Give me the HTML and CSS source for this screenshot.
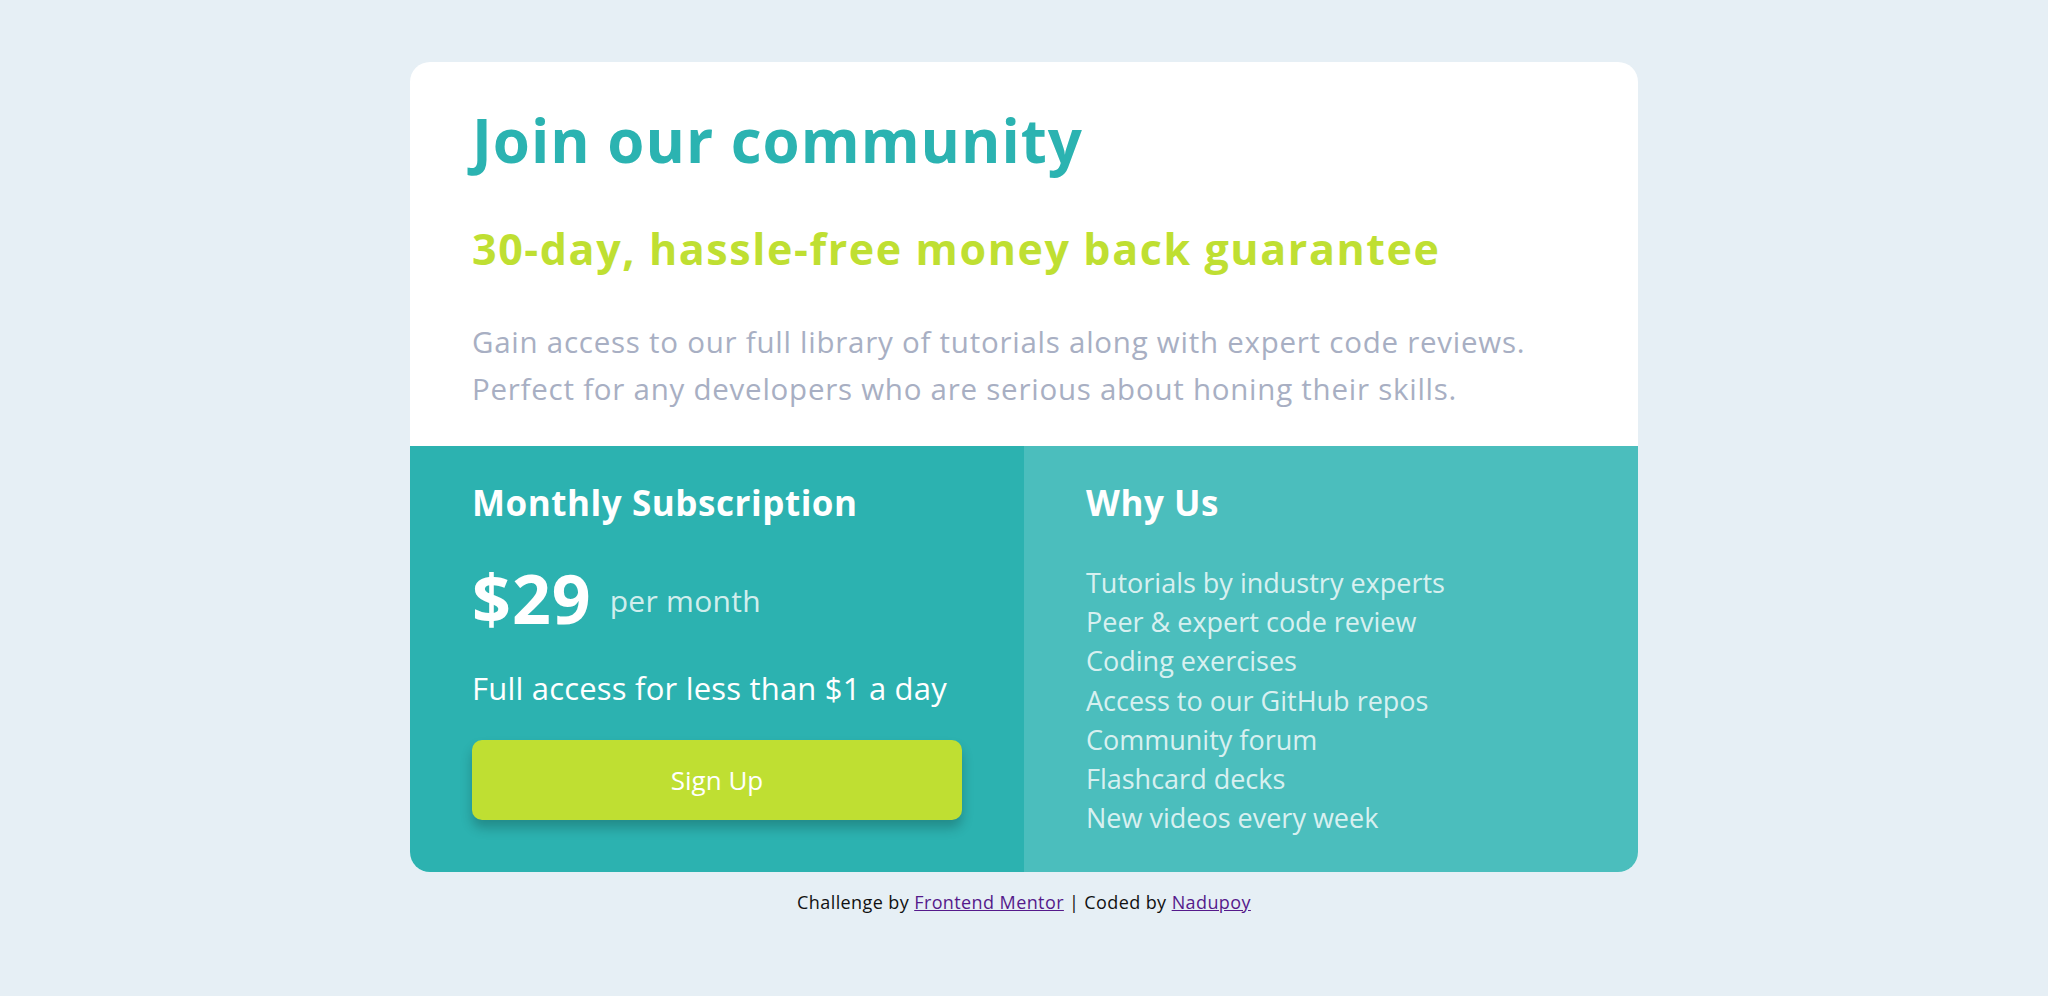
FILE: index.html
```html
<!DOCTYPE html>
<html lang="en">
<head>
<meta charset="utf-8">
<title>Single price grid component</title>
<link rel="stylesheet" href="styles.css">
</head>
<body>
<main class="card">
  <section class="intro">
    <h1 class="title">Join our community</h1>
    <h2 class="subtitle">30-day, hassle-free money back guarantee</h2>
    <p class="desc">Gain access to our full library of tutorials along with expert code reviews.<br>Perfect for any developers who are serious about honing their skills.</p>
  </section>
  <div class="bottom">
    <section class="plan">
      <h3 class="col-title">Monthly Subscription</h3>
      <div class="price-row">
        <span class="price">$29</span>
        <span class="per">per month</span>
      </div>
      <p class="access">Full access for less than $1 a day</p>
      <button class="signup" type="button">Sign Up</button>
    </section>
    <section class="why">
      <h3 class="col-title">Why Us</h3>
      <ul class="features">
        <li>Tutorials by industry experts</li>
        <li>Peer &amp; expert code review</li>
        <li>Coding exercises</li>
        <li>Access to our GitHub repos</li>
        <li>Community forum</li>
        <li>Flashcard decks</li>
        <li>New videos every week</li>
      </ul>
    </section>
  </div>
</main>
<footer class="attribution">
  Challenge by <a href="#" class="link">Frontend Mentor</a> | Coded by <a href="#" class="link">Nadupoy</a>
</footer>
</body>
</html>
```

FILE: styles.css
```css
* { box-sizing: border-box; }

html, body { margin: 0; padding: 0; }

body {
  background: #e6eff5;
  font-family: "Open Sans", "Liberation Sans", sans-serif;
  padding-top: 62px;
}

.card {
  width: 1228px;
  margin: 0 auto;
  background: #ffffff;
  border-radius: 20px;
  overflow: hidden;
}

.intro {
  padding: 42px 62px 34px;
}

.title {
  margin: 0;
  font-size: 60px;
  line-height: 72px;
  font-weight: 700;
  letter-spacing: 1px;
  color: #2bb3b1;
}

.subtitle {
  margin: 47px 0 0;
  font-size: 43px;
  line-height: 52px;
  font-weight: 700;
  letter-spacing: 1.6px;
  color: #bfdf32;
}

.desc {
  margin: 43px 0 0;
  font-size: 29.5px;
  line-height: 47px;
  letter-spacing: 0.75px;
  color: #a8afc3;
}

.bottom {
  display: grid;
  grid-template-columns: 1fr 1fr;
  color: #ffffff;
}

.plan {
  background: #2cb2b0;
  padding: 36px 62px 52px;
}

.why {
  background: #4bbebd;
  padding: 36px 62px 30px;
}

.col-title {
  margin: 0;
  font-size: 35px;
  line-height: 42px;
  font-weight: 700;
  letter-spacing: 0.55px;
}

.price-row {
  display: flex;
  align-items: center;
  gap: 18px;
  margin-top: 36px;
}

.price {
  font-size: 68px;
  line-height: 76px;
  font-weight: 700;
  letter-spacing: 1px;
}

.per {
  font-size: 30px;
  line-height: 40px;
  margin-top: 6px;
  letter-spacing: 0.3px;
  color: rgba(255, 255, 255, 0.8);
}

.access {
  margin: 32px 0 0;
  font-size: 31px;
  line-height: 40px;
  letter-spacing: 0.2px;
}

.signup {
  display: block;
  width: 100%;
  height: 80px;
  margin-top: 32px;
  border: 0;
  border-radius: 10px;
  background: #bfdf32;
  color: #ffffff;
  font-family: inherit;
  font-size: 26px;
  box-shadow: 0 8px 12px rgba(0, 0, 0, 0.22);
  cursor: pointer;
}

.features {
  list-style: none;
  margin: 39px 0 0;
  padding: 0;
  font-size: 27px;
  line-height: 39.2px;
  color: rgba(255, 255, 255, 0.8);
}

.attribution {
  margin-top: 18px;
  text-align: center;
  font-size: 18px;
  line-height: 24px;
  letter-spacing: 0.4px;
  color: #111;
}

.link { color: #551a8b; }
```
